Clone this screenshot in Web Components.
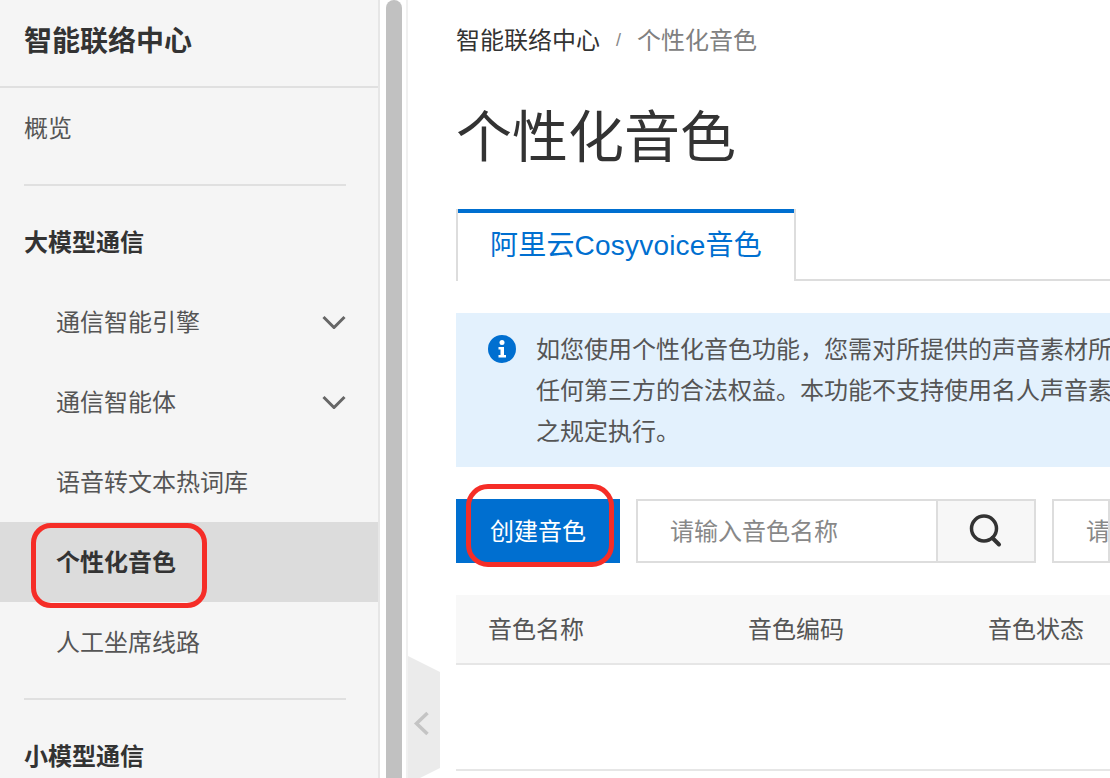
<!DOCTYPE html>
<html lang="zh"><head><meta charset="utf-8"><style>
html,body{margin:0;padding:0;height:100%;overflow:hidden;background:#fff}
body{font-family:"Liberation Sans","Noto Sans CJK SC",sans-serif;color:#333;font-size:24px}
</style></head><body>
<app-shell>
<side-nav slot="nav">
  <nav-head>智能联络中心</nav-head>
  <nav-item>概览</nav-item>
  <nav-rule></nav-rule>
  <nav-group>大模型通信</nav-group>
  <nav-item sub arrow>通信智能引擎</nav-item>
  <nav-item sub arrow>通信智能体</nav-item>
  <nav-item sub>语音转文本热词库</nav-item>
  <nav-item sub active marked>个性化音色</nav-item>
  <nav-item sub>人工坐席线路</nav-item>
  <nav-rule></nav-rule>
  <nav-group>小模型通信</nav-group>
</side-nav>
<voice-page slot="main"></voice-page>
</app-shell>
<script>
const def=(n,css,html)=>customElements.define(n,class extends HTMLElement{constructor(){super();this.attachShadow({mode:'open'}).innerHTML=`<style>${css}</style>${html}`;}});
def('app-shell',`:host{display:grid;grid-template-columns:380px 28px 1fr;height:778px;overflow:hidden;position:relative}
.gut{background:#fff;display:flex;padding-left:6px;gap:4px;box-sizing:border-box}
.bar{width:16px;background:#c1c1c1;border-radius:8px 8px 0 0}
.line{width:2px;background:#f0f0f0}
.h{position:absolute;left:408px;top:656px}`,
`<slot name="nav"></slot><div class="gut"><div class="bar"></div><div class="line"></div></div><slot name="main"></slot>
<svg class="h" width="32" height="128" viewBox="0 0 32 128"><path d="M0 0L32 16V112L0 128Z" fill="#ebebeb"/><path d="M19.500 57L8.500 67.500L19.500 78" fill="none" stroke="#c4c4c4" stroke-width="3.500"/></svg>`);
def('side-nav',`:host{display:block;box-sizing:border-box;height:778px;background:#f5f5f5;border-right:2px solid #e6e6e6;overflow:hidden}`,`<slot></slot>`);
def('nav-head',`:host{display:flex;align-items:center;box-sizing:border-box;height:88px;padding:0 0 8px 24px;border-bottom:2px solid #e0e0e0;font-size:28px;font-weight:700;color:#333}`,`<slot></slot>`);
def('nav-rule',`:host{display:block;height:2px;background:#e0e0e0;margin:16px 32px 16px 24px}`,``);
def('nav-group',`:host{display:flex;align-items:center;box-sizing:border-box;height:80px;padding:0 0 4px 24px;font-weight:700;color:#333}`,`<slot></slot>`);
def('nav-item',`:host{display:flex;align-items:center;height:80px;padding:0 32px 0 24px;color:#555;position:relative}
:host([sub]){padding-left:56px}
:host([active]){background:#dcdcdc;color:#333;font-weight:700}
.t{padding-bottom:4px}
.s{flex:1}
svg{display:none}
:host([arrow]) svg{display:block}
.m{display:none;position:absolute;left:31px;top:1px;width:176px;height:85px;box-sizing:border-box;border:5px solid #f52d27;border-radius:20px}
:host([marked]) .m{display:block}`,
`<span class="t"><slot></slot></span><span class="s"></span><svg width="24" height="14" viewBox="0 0 24 14"><path d="M1.500 2L12 12.500L22.500 2" fill="none" stroke="#666" stroke-width="3"/></svg><div class="m"></div>`);
def('page-crumbs',`:host{display:flex;align-items:center;height:80px;color:#333;white-space:nowrap}
span,b{padding-bottom:4px}
i{font-style:normal;color:#888;font-size:18px;margin:0 16px 0 16px}
b{font-weight:400;color:#808080}`,`<span>智能联络中心</span><i>/</i><b>个性化音色</b>`);
def('voice-page',`:host{display:block;padding:0 0 0 48px;overflow:hidden;height:778px;box-sizing:border-box;min-width:0}
h1{margin:0;font-size:56px;font-weight:400;line-height:76px;height:129px;padding-top:20px;box-sizing:border-box;color:#333}
.tabs{display:flex;height:72px;box-sizing:border-box}
.tab{width:340px;flex:none;box-sizing:border-box;border-left:2px solid #ddd;border-right:2px solid #ddd;color:#006fd0;font-size:28px;letter-spacing:.2px;padding:0 0 4px 32px;display:flex;align-items:center;background:linear-gradient(#006fd0,#006fd0) top/100% 4px no-repeat #fff;background-clip:padding-box;white-space:nowrap}
.rest{flex:1;border-bottom:2px solid #ddd}
.alert{margin-top:32px;height:154px;background:#e3f1fd;display:flex;padding:16px 0 0 32px;box-sizing:border-box;gap:20px;color:#555;white-space:nowrap;line-height:41px;overflow:hidden}
.alert svg{flex:none;margin-top:6px}
.tb{display:flex;gap:16px;margin-top:32px;height:64px;white-space:nowrap}
.btn{width:164px;flex:none;box-sizing:border-box;padding-bottom:4px;background:#006fd0;color:#fff;display:flex;align-items:center;justify-content:center;position:relative}
.mk{position:absolute;left:10px;top:-15px;width:148px;height:83px;box-sizing:border-box;border:5px solid #f52d27;border-radius:22px}
.in{width:400px;flex:none;box-sizing:border-box;border:2px solid #ddd;display:flex;color:#888}
.in span{flex:1;padding:0 0 4px 32px;display:flex;align-items:center}
.in u{width:98px;text-decoration:none;flex:none;box-sizing:border-box;background:#f7f7f7;border-left:2px solid #ddd;display:flex;align-items:center;justify-content:center}
.th{margin-top:32px;height:70px;box-sizing:border-box;background:#f8f8f8;border-bottom:2px solid #e6e6e6;display:grid;grid-template-columns:260px 240px 1fr;padding:0 0 4px 32px;align-items:center;color:#555;white-space:nowrap}
.empty{height:104px;border-bottom:2px solid #e6e6e6}`,
`<page-crumbs></page-crumbs><h1>个性化音色</h1>
<div class="tabs"><div class="tab">阿里云Cosyvoice音色</div><div class="rest"></div></div>
<div class="alert"><svg width="28" height="28" viewBox="0 0 28 28"><circle cx="14" cy="14" r="14" fill="#006fd0"/><circle cx="14" cy="7.500" r="2.500" fill="#fff"/><path d="M10.500 12H16V20H18V22.500H10.500V20H12.500V14.500H10.500Z" fill="#fff"/></svg>
<div>如您使用个性化音色功能，您需对所提供的声音素材所<br>任何第三方的合法权益。本功能不支持使用名人声音素<br>之规定执行。</div></div>
<div class="tb"><div class="btn">创建音色<div class="mk"></div></div>
<div class="in"><span>请输入音色名称</span><u><svg width="34" height="34" viewBox="0 0 34 34"><circle cx="15" cy="14.500" r="12.500" fill="none" stroke="#333" stroke-width="3.500"/><path d="M23.500 24L30 30.500" stroke="#333" stroke-width="4" stroke-linecap="round"/></svg></u></div>
<div class="in" style="width:58px;overflow:hidden;flex:none"><span style="padding-right:0">请</span></div></div>
<div class="th"><span>音色名称</span><span>音色编码</span><span>音色状态</span></div>
<div class="empty"></div>`);
</script>
</body></html>
